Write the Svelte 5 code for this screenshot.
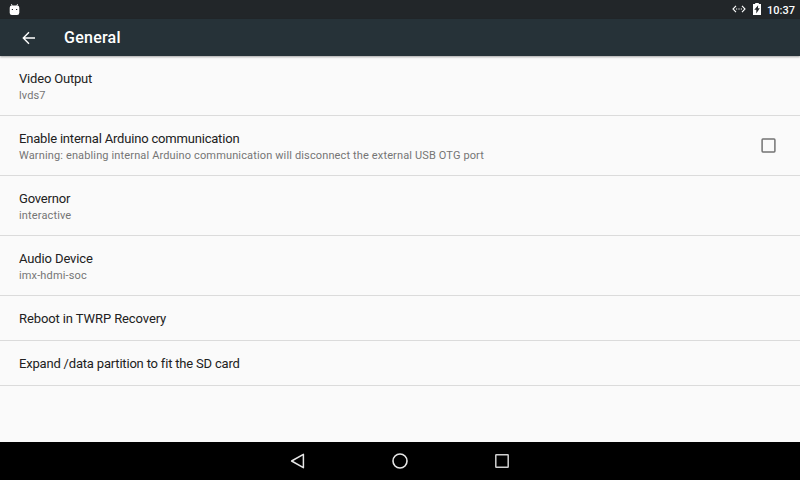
<script>
  const settings = [
    { title: 'Video Output', summary: 'lvds7' },
    {
      title: 'Enable internal Arduino communication',
      summary: 'Warning: enabling internal Arduino communication will disconnect the external USB OTG port',
      checkbox: true
    },
    { title: 'Governor', summary: 'interactive' },
    { title: 'Audio Device', summary: 'imx-hdmi-soc', spacing: -0.12 },
    { title: 'Reboot in TWRP Recovery', spacing: -0.1 },
    { title: 'Expand /data partition to fit the SD card' }
  ];
</script>

<div class="screen">
  <div class="status">
    <svg class="robot" width="12" height="12" viewBox="0 0 12 12">
      <path d="M3.4 0 4.2 2M9.6 0 8.8 2" stroke="#dcdedf" stroke-width=".9" />
      <path d="M1.7 3.7Q1.7 1.6 3.9 1.6h5.2q2.2 0 2.2 2.1v5.1q0 2.2-2.2 2.2H3.9q-2.2 0-2.2-2.2z" fill="#fff" />
      <path d="M3.8 4.9h1.2v1.1H3.8zM8 4.9h1.2v1.1H8z" fill="#222629" />
    </svg>
    <div class="indicators">
      <svg class="ethernet" width="14" height="8" viewBox="0 0 14 8">
        <path d="M4 .9 1 4l3 3.1M10 .9 13 4l-3 3.1" fill="none" stroke="#fff" stroke-width="1.1" />
        <path d="M4 3.5h1.2v1H4zM6.4 3.5h1.2v1H6.4zM8.8 3.5H10v1H8.8z" fill="#fff" />
      </svg>
      <svg class="battery" width="8" height="12" viewBox="0 0 8 12">
        <path d="M2.2 0h3.6v1H8v11H0V1h2.2z" fill="#fff" />
        <path d="M5.2 2.2 1.3 6.8h2v3.6l3.5-5.1H4.9z" fill="#222629" />
      </svg>
      <span class="clock">10:37</span>
    </div>
  </div>

  <header>
    <svg width="14" height="14" viewBox="0 0 14 14">
      <path d="M13 7H1.6M7 1.2 1.3 7 7 12.8" fill="none" stroke="#fff" stroke-width="1.4" />
    </svg>
    <h1>General</h1>
  </header>

  <main>
    {#each settings as s}
      <div class="row" class:single={!s.summary}>
        <div class="text">
          <div class="title" style:letter-spacing={`${s.spacing ?? -0.19}px`}>{s.title}</div>
          {#if s.summary}<div class="summary">{s.summary}</div>{/if}
        </div>
        {#if s.checkbox}
          <svg class="checkbox" width="15" height="15" viewBox="0 0 15 15">
            <rect x="1.1" y="1.1" width="12.8" height="12.8" rx=".8" fill="none" stroke="#737373" stroke-width="1.5" />
          </svg>
        {/if}
      </div>
    {/each}
  </main>

  <nav>
    <svg width="18" height="18" viewBox="0 0 18 18">
      <path d="M14.4 2.3v13.4L2.6 9z" fill="none" stroke="#e6e6e6" stroke-width="1.5" stroke-linejoin="round" />
    </svg>
    <svg width="18" height="18" viewBox="0 0 18 18">
      <circle cx="9" cy="9" r="7" fill="none" stroke="#e6e6e6" stroke-width="1.6" />
    </svg>
    <svg width="18" height="18" viewBox="0 0 18 18">
      <rect x="2.8" y="2.8" width="12.4" height="12.4" rx=".5" fill="none" stroke="#d0d0d0" stroke-width="1.5" />
    </svg>
  </nav>
</div>

<style>
  .screen {
    width: 800px;
    height: 480px;
    display: flex;
    flex-direction: column;
    overflow: hidden;
    background: #fafafa;
    font-family: Roboto, sans-serif;
  }
  svg { display: block; flex: none; }
  .status {
    height: 19px;
    flex: none;
    display: flex;
    align-items: center;
    justify-content: space-between;
    padding: 0 5px 0 8px;
    background: #222629;
  }
  .indicators { display: flex; align-items: center; }
  .battery, .ethernet { margin-bottom: 1px; }
  .battery { margin-left: 7px; margin-right: 6px; }
  .clock {
    color: #fff;
    font-size: 11px;
    line-height: 19px;
    font-weight: 500;
    padding-top: 1px;
    height: 18px;
  }
  header {
    height: 37px;
    flex: none;
    display: flex;
    align-items: center;
    gap: 28px;
    padding-left: 22px;
    background: #263238;
    box-shadow: 0 1px 2px rgba(0, 0, 0, .35);
    z-index: 1;
  }
  h1 {
    margin: 0;
    color: #fff;
    font-size: 16px;
    line-height: 19px;
    font-weight: 500;
    letter-spacing: .25px;
  }
  main { flex: 1; }
  .row {
    box-sizing: border-box;
    height: 60px;
    display: flex;
    align-items: center;
    justify-content: space-between;
    padding: 1px 24px 0 19px;
    border-bottom: 1px solid #dbdbdb;
  }
  .single { height: 45px; }
  .checkbox { margin-bottom: 2px; }
  .title {
    color: #212121;
    font-size: 13px;
    line-height: 18px;
    white-space: nowrap;
  }
  .summary {
    color: #757575;
    font-size: 11px;
    line-height: 15px;
    letter-spacing: .137px;
    white-space: nowrap;
  }
  nav {
    height: 38px;
    flex: none;
    display: flex;
    align-items: center;
    justify-content: center;
    gap: 84px;
    background: #000;
  }
</style>
